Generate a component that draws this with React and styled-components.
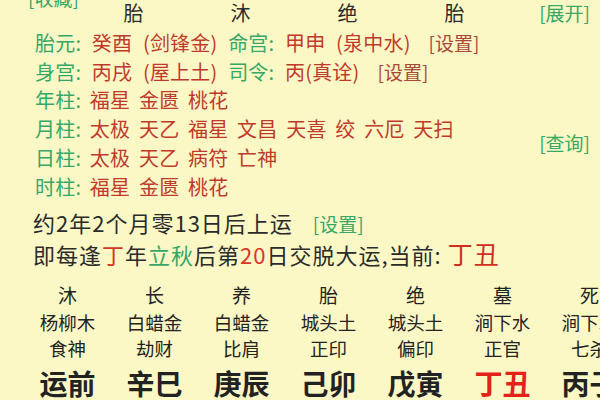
import styled, { createGlobalStyle } from "styled-components";

const GlobalStyle = createGlobalStyle`
  html, body {
    margin: 0;
    padding: 0;
    background: #fcf8c5;
  }
  body {
    font-family: "Noto Sans CJK SC", "Noto Sans", sans-serif;
    overflow: hidden;
  }
`;

const GREEN = "#35a767";
const RED = "#c03a2c";

const Page = styled.div`
  width: 600px;
  height: 400px;
  overflow: hidden;
  color: #2b2b2b;
`;

const HeaderRow = styled.div`
  display: flex;
  align-items: flex-start;
  height: 29px;
  padding-left: 28px;
`;

const LinkText = styled.span`
  font-size: 19px;
  line-height: 26px;
  word-spacing: 0;
  letter-spacing: 0;
  color: ${(p) => p.color || GREEN};
  white-space: nowrap;
`;

const TopLink = styled(LinkText)`
  width: 52px;
  margin-top: -15px;
`;

const PhaseHeads = styled.div`
  display: grid;
  grid-template-columns: repeat(4, 107px);
  font-size: 20px;
  line-height: 26px;
  text-align: center;
`;

const RightLink = styled(LinkText)`
  margin-left: auto;
  margin-right: 10px;
`;

const PillarSection = styled.div`
  display: grid;
  grid-template-columns: 1fr auto;
  padding-left: 35px;
`;

const InfoRows = styled.div`
  display: flex;
  flex-direction: column;
`;

const InfoRow = styled.div`
  font-size: 20px;
  line-height: 28.7px;
  word-spacing: ${(p) => p.$ws ?? 6}px;
  letter-spacing: 0.2px;
  white-space: nowrap;
  color: ${RED};
`;

const Label = styled.span`
  color: ${GREEN};
`;

const Gap = styled.span`
  display: inline-block;
  width: ${(p) => p.w || 6}px;
`;

const SideCol = styled.div`
  padding-top: 101px;
  padding-right: 10px;
`;

const Line = styled.div`
  padding-left: 33px;
  font-size: 22px;
  letter-spacing: 1px;
  line-height: ${(p) => p.lh}px;
  margin-top: ${(p) => p.mt || 0}px;
  white-space: nowrap;
`;

const Hl = styled.span`
  color: ${(p) => p.color};
  font-size: ${(p) => p.size || "inherit"};
`;

const LuckGrid = styled.div`
  display: grid;
  grid-template-columns: repeat(7, 87px);
  margin-left: 24px;
  margin-top: 11px;
  width: max-content;
  text-align: center;
`;

const LuckCell = styled.div`
  font-size: ${(p) => p.size}px;
  line-height: ${(p) => p.lh}px;
  font-weight: ${(p) => (p.bold ? 700 : 400)};
  color: ${(p) => (p.red ? "#e3231a" : "#222")};
  white-space: nowrap;
`;

const columns = [
  { phase: "沐", nayin: "杨柳木", god: "食神", gz: "运前" },
  { phase: "长", nayin: "白蜡金", god: "劫财", gz: "辛巳" },
  { phase: "养", nayin: "白蜡金", god: "比肩", gz: "庚辰" },
  { phase: "胎", nayin: "城头土", god: "正印", gz: "己卯" },
  { phase: "绝", nayin: "城头土", god: "偏印", gz: "戊寅" },
  { phase: "墓", nayin: "涧下水", god: "正官", gz: "丁丑", current: true },
  { phase: "死", nayin: "涧下水", god: "七杀", gz: "丙子" },
];

const shensha = [
  ["年柱", "福星 金匮 桃花"],
  ["月柱", "太极 天乙 福星 文昌 天喜 绞 六厄 天扫"],
  ["日柱", "太极 天乙 病符 亡神"],
  ["时柱", "福星 金匮 桃花"],
];

export default function App() {
  return (
    <Page>
      <GlobalStyle />
      <HeaderRow>
        <TopLink>[收藏]</TopLink>
        <PhaseHeads>
          <span>胎</span>
          <span>沐</span>
          <span>绝</span>
          <span>胎</span>
        </PhaseHeads>
        <RightLink>[展开]</RightLink>
      </HeaderRow>

      <PillarSection>
        <InfoRows>
          <InfoRow>
            <Label>胎元:</Label> 癸酉 (剑锋金) <Label>命宫:</Label> 甲申 (泉中水)
            <Gap w={18} />
            <LinkText color="#a9473a">[设置]</LinkText>
          </InfoRow>
          <InfoRow>
            <Label>身宫:</Label> 丙戌 (屋上土) <Label>司令:</Label> 丙(真诠)
            <Gap w={18} />
            <LinkText color="#a9473a">[设置]</LinkText>
          </InfoRow>
          {shensha.map(([label, text]) => (
            <InfoRow key={label} $ws={4}>
              <Label>{label}:</Label> {text}
            </InfoRow>
          ))}
        </InfoRows>
        <SideCol>
          <LinkText>[查询]</LinkText>
        </SideCol>
      </PillarSection>

      <Line lh={30} mt={6}>
        约2年2个月零13日后上运
        <Gap w={20} />
        <LinkText>[设置]</LinkText>
      </Line>
      <Line lh={32}>
        即每逢<Hl color="#d8352a">丁</Hl>年<Hl color={GREEN}>立秋</Hl>后第
        <Hl color="#d8352a">20</Hl>日交脱大运,当前:{" "}
        <Hl color="#cf2f22" size="25px">丁丑</Hl>
      </Line>

      <LuckGrid>
        {columns.map((c) => (
          <LuckCell key={c.gz + "p"} size={19} lh={28}>
            {c.phase}
          </LuckCell>
        ))}
        {columns.map((c) => (
          <LuckCell key={c.gz + "n"} size={18.5} lh={26}>
            {c.nayin}
          </LuckCell>
        ))}
        {columns.map((c) => (
          <LuckCell key={c.gz + "g"} size={18.5} lh={26}>
            {c.god}
          </LuckCell>
        ))}
        {columns.map((c) => (
          <LuckCell key={c.gz} size={28} lh={44} bold red={c.current}>
            {c.gz}
          </LuckCell>
        ))}
      </LuckGrid>
    </Page>
  );
}
